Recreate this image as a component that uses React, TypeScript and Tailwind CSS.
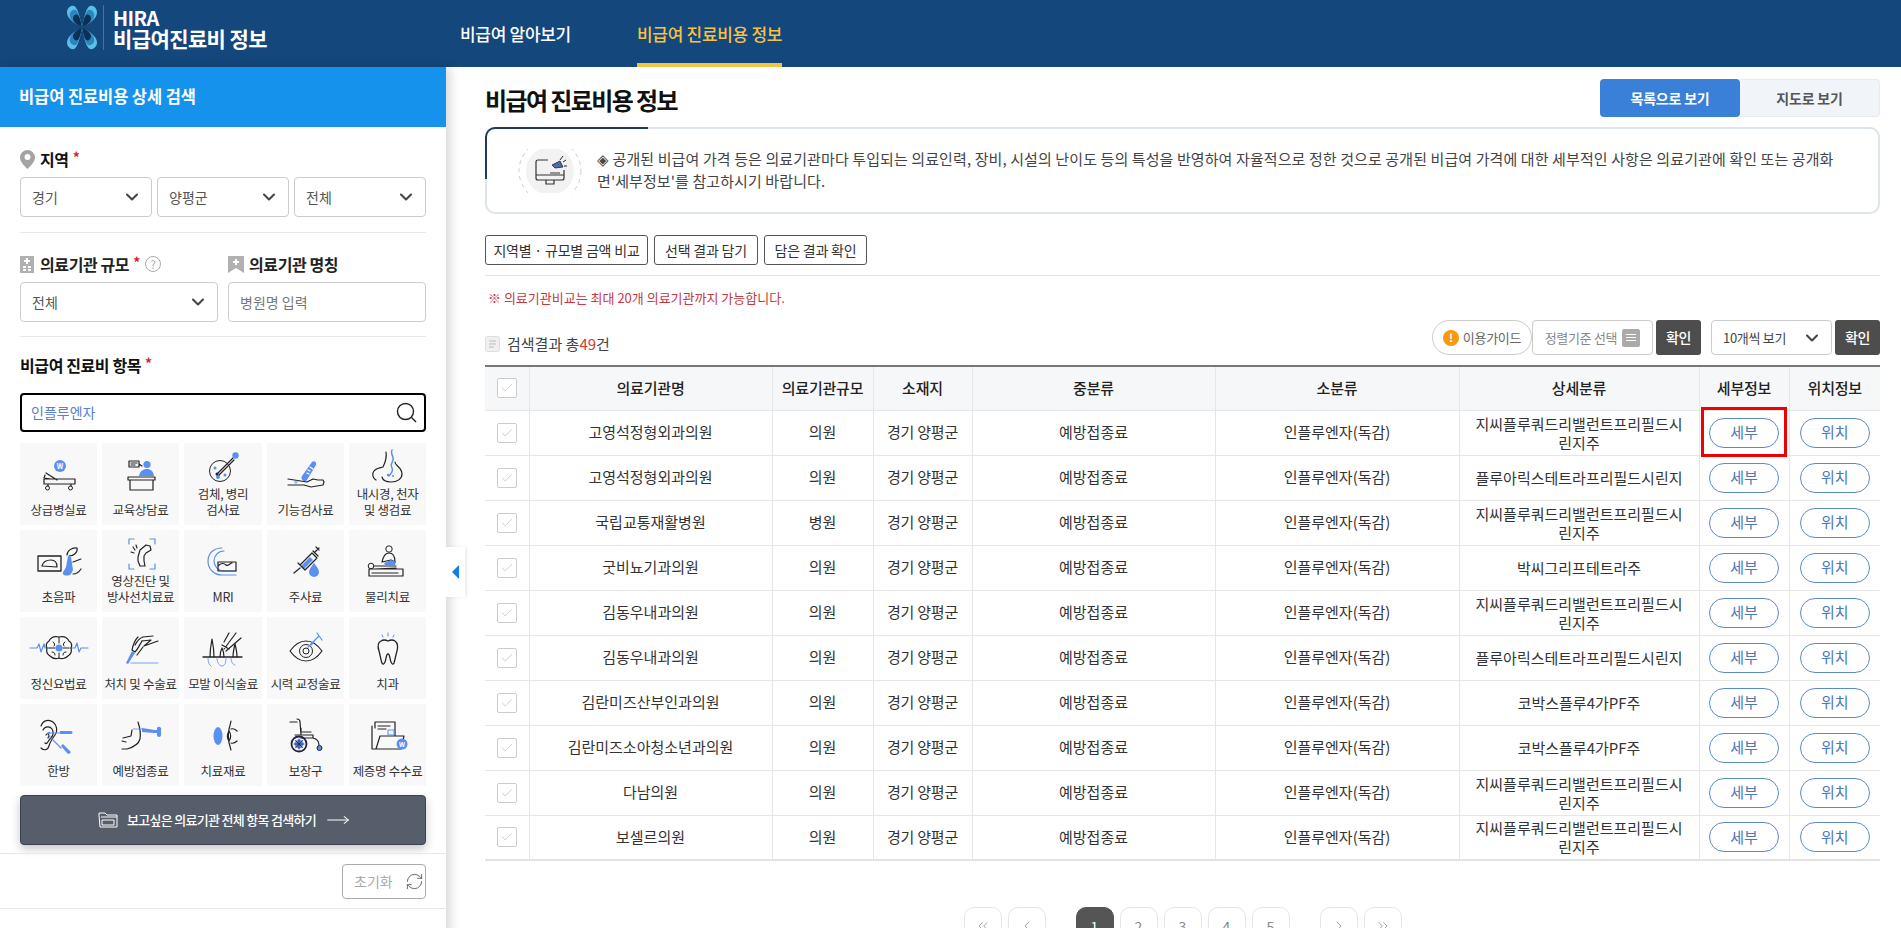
import React from "react";
import { ChevronDown, ChevronLeft, ChevronRight, ChevronsLeft, ChevronsRight, Check, RefreshCw, MoveRight } from "lucide-react";

const BLUE = "#5b8ff0";
const INK = "#222";

// shared props for the line drawings of the category cards
const Ln = ({ d, c = INK, w = 1.2 }: { d: string; c?: string; w?: number }) => (
  <path d={d} fill="none" stroke={c} strokeWidth={w} strokeLinecap="round" strokeLinejoin="round" />
);
const Fl = ({ d, c = BLUE }: { d: string; c?: string }) => <path d={d} fill={c} />;

const categories: { label: string[]; art: React.ReactNode }[] = [
  {
    label: ["상급병실료"],
    art: (
      <>
        <circle cx="31" cy="9" r="6" fill={BLUE} />
        <text x="31" y="11.5" fontSize="7" fontWeight="700" fill="#fff" textAnchor="middle">W</text>
        <Ln d="M15 22h31v5H15zM15 27v-5M17 16l11 7M16 18l-1 3 7 1M19 27v2M42 27v2" />
        <circle cx="18.500" cy="31" r="2" fill="none" stroke={INK} />
        <circle cx="41.500" cy="31" r="2" fill="none" stroke={INK} />
      </>
    ),
  },
  {
    label: ["교육상담료"],
    art: (
      <>
        <Ln d="M18 4h10v6H18zM28 7l3 2M20 6h6M20 8h4" />
        <circle cx="36" cy="7.500" r="3.600" fill={BLUE} />
        <Fl d="M28 19c1-5 4-7 8-7s6 2 7 7z" />
        <Ln d="M17 20h27v3H17zM19 23h23v10H19z" />
      </>
    ),
  },
  {
    label: ["검체, 병리", "검사료"],
    art: (
      <>
        <circle cx="27" cy="22" r="10.500" fill="none" stroke={INK} />
        <circle cx="22" cy="19" r="1.500" fill={BLUE} />
        <circle cx="25" cy="28" r="2" fill={BLUE} />
        <circle cx="32" cy="26" r="1.500" fill={BLUE} />
        <Ln d="M24 25L40 9M26 26L41 11" />
        <circle cx="24" cy="25" r="1.500" fill={INK} />
        <circle cx="42.500" cy="6.500" r="3.200" fill={BLUE} />
      </>
    ),
  },
  {
    label: ["기능검사료"],
    art: (
      <>
        <Fl d="M26 19L36 5c2-2 5 0 4 3L31 23c-2 3-7 0-5-4z" />
        <Ln d="M34 10l3 2M32 13l2 1M31 16l2 1" c="#fff" />
        <Ln d="M12 22l19 3 6-3 5 1h5l1 2-1 3-6 1-6 1-7-2-16 0" />
        <circle cx="20" cy="25" r="1.800" fill={BLUE} opacity=".6" />
      </>
    ),
  },
  {
    label: ["내시경, 천자", "및 생검료"],
    art: (
      <>
        <Ln d="M28 3c1 6-1 11-3 15-3 1-9 1-10 6-1 3 1 6 3 7M37 13c0 4 7 5 7 12 0 5-5 8-11 8-4 0-8-1-9-5" />
        <Ln d="M34 1c-2 4 2 6 1 10s-3 4-1 8-2 6-3 8" c={BLUE} w={1.500} />
        <circle cx="30" cy="26" r="1.200" fill={BLUE} />
        <circle cx="35" cy="27" r="1" fill={BLUE} />
      </>
    ),
  },
  {
    label: ["초음파"],
    art: (
      <>
        <Ln d="M9 12h23v15H9z" w={1.300} />
        <Ln d="M13 22c1-4 5-6 9-6s6 3 6 7z" />
        <Ln d="M38 11c0-4 5-8 10-7 1 4-3 8-8 8M44 18l8-3M44 30c3 0 6-2 8-5" />
        <Fl d="M39 12l3 1 2 13-2 4c-2 2-7 2-8 0-1-2 2-4 3-7z" />
      </>
    ),
  },
  {
    label: ["영상진단 및", "방사선치료료"],
    art: (
      <>
        <Ln d="M18 8V3h5M39 3h5v5M18 28v5h5M39 33h5v-5" c={BLUE} />
        <Ln d="M27 21l2-7 6-5 4 1 1 4-5 3-2 3 0 5 1 5-5 0-2-5z" />
        <Ln d="M22 11l2 3M20 16l3 1M25 9l1 3" />
      </>
    ),
  },
  {
    label: ["MRI"],
    art: (
      <>
        <Ln d="M43 31H29c-8 0-14-6-14-14S21 4 29 4" c={BLUE} />
        <Ln d="M43 27H31c-6 0-10-5-10-10S25 7 31 7" c={BLUE} />
        <Ln d="M25 18h18v9H25zM25 22c3-3 6-3 8-1s4-2 6-2" />
      </>
    ),
  },
  {
    label: ["주사료"],
    art: (
      <>
        <Fl d="M25 22l9-9 3 3-9 9z" />
        <Ln d="M24 21l12-12 5 5-12 12zM18 29l6-5M22 19l7 7M37 7l5 5M39 8l4-4M40 3l3 3M41 4l2 2" />
        <Fl d="M38 19c2 3 5 6 5 9a5 5 0 0 1-10 0c0-3 3-6 5-9z" />
      </>
    ),
  },
  {
    label: ["물리치료"],
    art: (
      <>
        <circle cx="31" cy="5" r="3.200" fill="none" stroke={INK} />
        <Ln d="M31 9c-4 0-6 4-7 9l9-2 4 2c0-5-2-9-6-9z" />
        <Fl d="M26 19l7-3 5 2-1 3-10 0z" />
        <circle cx="13" cy="22" r="2.800" fill="none" stroke={INK} />
        <Ln d="M11 25h34v7H11zM16 22h22M16 25l22-1M14 29h26" />
      </>
    ),
  },
  {
    label: ["정신요법료"],
    art: (
      <>
        <Ln d="M1 17h7l2-4 2 8 3-8 1 4h4M41 17h5l2-5 2 9 2-4h7" c={BLUE} />
        <Ln d="M20 10c2-4 6-5 10-4 4-1 8 0 10 4 3 2 3 5 2 7 1 3 0 6-3 8-3 3-7 3-9 2-3 1-6 1-9-2-3-2-4-5-3-8-1-2-1-5 2-7z" />
        <Ln d="M24 11c2 1 2 3 1 4M36 11c-2 1-2 3-1 4M23 21c2 0 3 1 3 3M37 21c-2 0-3 1-3 3M30 6v6M30 22v5M20 17h6M34 17h6" w={1} />
        <circle cx="30" cy="17" r="3.500" fill={BLUE} />
      </>
    ),
  },
  {
    label: ["처치 및 수술료"],
    art: (
      <>
        <Ln d="M24 14c2-4 5-7 8-8l10-1M31 10l9-1-7 6 14-5M32 16l-6 8" />
        <Ln d="M27 6c-3 3-5 8-6 13l3 2c3-3 5-8 7-11" />
        <Fl d="M21 20l3 2-7 11-2-1z" />
        <Ln d="M20 32h27" c={BLUE} w={.8} />
      </>
    ),
  },
  {
    label: ["모발 이식술료"],
    art: (
      <>
        <Ln d="M10 26h39" w={1.300} />
        <Ln d="M17 26c0-7 1-13 2-18 1 5 2 11 2 18M40 26c0-5 1-9 2-13 1 4 2 8 2 13M27 26c0-4 1-7 2-9 1 2 2 5 2 9" />
        <Ln d="M31 18L43 2M33 20L48 7M29 14l7 4M36 2l-5 9" />
        <Ln d="M15 27c0 4 1 7 3 8M24 27c0 4 2 8 5 8s4-4 4-8M38 27c0 4 2 7 4 7" c={BLUE} w={.8} />
      </>
    ),
  },
  {
    label: ["시력 교정술료"],
    art: (
      <>
        <Ln d="M14 20c5-7 10-10 16-10s11 3 16 10c-5 7-10 10-16 10s-11-3-16-10z" />
        <circle cx="30" cy="20" r="6.500" fill="none" stroke={INK} />
        <circle cx="30" cy="20" r="3" fill="none" stroke={INK} />
        <Ln d="M32 16L43 5M41 2l5 7M35 14l3-3" c={BLUE} />
      </>
    ),
  },
  {
    label: ["치과"],
    art: (
      <>
        <Ln d="M23 10c3-2 5-1 7 0 2-1 4-2 7 0 3 2 3 7 2 10s-2 9-3 12c-1 2-2 1-3-1s-1-8-3-8-2 6-3 8-2 3-3 1-2-9-3-12-2-8 2-10z" w={1.300} />
        <Ln d="M24 4l1 2M30 2v3M36 4l-1 2" c={BLUE} w={1} />
      </>
    ),
  },
  {
    label: ["한방"],
    art: (
      <>
        <Ln d="M12 8c2-6 8-7 12-4s5 9 2 13-5 7-6 11-5 5-8 2M14 12c2-4 7-4 9-1s1 7-2 10c-2 2-3 6-5 4M17 17c2-3 4 0 2 3" />
        <Ln d="M19 15h12M20 18l12 12" c={BLUE} />
        <Fl d="M31 13h11a1.500 1.500 0 0 1 0 3H31zM32 28l2-2 7 7c2 2-1 4-3 2z" />
        <circle cx="20" cy="15" r="1.300" fill={BLUE} />
      </>
    ),
  },
  {
    label: ["예방접종료"],
    art: (
      <>
        <Ln d="M27 4c2 6 3 11 2 17-1 4-6 8-13 10h-5M12 20l8-2 1-6M11 23l4 1" />
        <Ln d="M22 11h9" c={BLUE} w={.8} />
        <Fl d="M31 10l13 2h2v-2a2 2 0 0 1 4 2v5a2 2 0 0 1-4 0v-2h-3l-12-1z" />
      </>
    ),
  },
  {
    label: ["치료재료"],
    art: (
      <>
        <ellipse cx="25" cy="18" rx="4.500" ry="9" fill={BLUE} />
        <Ln d="M38 3c-1 5-1 5-2 8-1 5-1 9 0 14 1 2 1 4 2 7M38 11c3-1 5 1 6 2M38 25c3 1 5-1 6-2" />
        <Ln d="M36 13c-2 3-2 7 0 10 2-3 2-7 0-10z" />
      </>
    ),
  },
  {
    label: ["보장구"],
    art: (
      <>
        <Ln d="M14 4h7M21 1c2 0 3 1 3 3l1 13h12v3H25M25 10v4h10M37 20c4 1 6 3 6 7M24 17h-5" w={1.200} />
        <circle cx="23" cy="26" r="7.500" fill="none" stroke="#224" strokeWidth="1.800" />
        <circle cx="23" cy="26" r="4.500" fill={BLUE} />
        <Ln d="M23 21v10M18 26h10M19.500 22.500l7 7M26.500 22.500l-7 7" c="#224" w={.8} />
        <circle cx="43.500" cy="30" r="2.500" fill={BLUE} stroke="#224" />
      </>
    ),
  },
  {
    label: ["제증명 수수료"],
    art: (
      <>
        <Ln d="M17 4h20v14M17 4v6M14 8v23h4l4-13h24M46 18l-3 13H18" />
        <Ln d="M20 8h12M20 11h8" />
        <path d="M30 12h6v5h-6z" fill="none" stroke={BLUE} />
        <circle cx="44" cy="26" r="5.500" fill={BLUE} />
        <text x="44" y="28.500" fontSize="6.500" fontWeight="700" fill="#fff" textAnchor="middle">W</text>
      </>
    ),
  },
];

const rows = [
  ["고영석정형외과의원", "의원", "지씨플루쿼드리밸런트프리필드시린지주"],
  ["고영석정형외과의원", "의원", "플루아릭스테트라프리필드시린지"],
  ["국립교통재활병원", "병원", "지씨플루쿼드리밸런트프리필드시린지주"],
  ["굿비뇨기과의원", "의원", "박씨그리프테트라주"],
  ["김동우내과의원", "의원", "지씨플루쿼드리밸런트프리필드시린지주"],
  ["김동우내과의원", "의원", "플루아릭스테트라프리필드시린지"],
  ["김란미즈산부인과의원", "의원", "코박스플루4가PF주"],
  ["김란미즈소아청소년과의원", "의원", "코박스플루4가PF주"],
  ["다남의원", "의원", "지씨플루쿼드리밸런트프리필드시린지주"],
  ["보셀르의원", "의원", "지씨플루쿼드리밸런트프리필드시린지주"],
];

const headers = ["의료기관명", "의료기관규모", "소재지", "중분류", "소분류", "상세분류", "세부정보", "위치정보"];

// four mirrored petals of the logo, one colour per layer
const petal = "M0 -1C-2 -8 -3 -17 -7 -21C-10 -23 -15 -20 -15 -15C-15 -9 -7 -3 0 -1z";
const LogoLayer = ({ k, fill }: { k: number; fill: string }) => (
  <g fill={fill}>
    <path d={petal} transform={`translate(15 22.500) scale(${k} ${k})`} />
    <path d={petal} transform={`translate(15 22.500) scale(${-k} ${k})`} />
    <path d={petal} transform={`translate(15 22.500) scale(${k} ${-k})`} />
    <path d={petal} transform={`translate(15 22.500) scale(${-k} ${-k})`} />
  </g>
);

const Select = ({ text, className }: { text: string; className: string }) => (
  <div className={`h-10 flex items-center justify-between pl-[11px] pr-[9px] border border-[#ccc] rounded-[4px] text-[14px] text-[#555] ${className}`}>
    <span>{text}</span>
    <ChevronDown size={20} strokeWidth={2.5} className="text-[#444]" />
  </div>
);

const Checkbox = () => (
  <span className="w-5 h-5 mx-auto flex items-center justify-center border border-[#ccc] rounded-[2px] bg-white">
    <Check size={14} strokeWidth={1} className="text-[#aaa]" />
  </span>
);

const Required = () => <span className="text-[#d9232e] text-[14px] ml-1 -mt-[3px]">*</span>;

const Sidebar = () => (
  <aside className="relative w-[446px] shrink-0 bg-white shadow-[4px_0_10px_rgba(0,0,0,0.16)] z-10">
    <div className="h-[60px] bg-[#1592ec] pl-[19px] flex items-center text-white text-[16.500px] font-bold tracking-[-0.1px] pb-[2px]">
      비급여 진료비용 상세 검색
    </div>
    <div className="px-5">
      <div className="pt-[18px] flex items-center h-[50px] pb-[4px] text-[16px] font-bold text-[#111] tracking-[-0.4px]">
        <svg width="15" height="19" viewBox="0 0 15 19" className="mr-[5px]">
          <path d="M7.500 0a7.500 7.500 0 0 1 7.500 7.500c0 4-4 8-7.500 11.500C4 15.500 0 11.500 0 7.500A7.500 7.500 0 0 1 7.500 0z" fill="#a3a3a3" />
          <circle cx="7.500" cy="7" r="3" fill="#fff" />
        </svg>
        지역<Required />
      </div>
      <div className="flex gap-[5px]">
        <Select text="경기" className="w-[132px]" />
        <Select text="양평군" className="w-[132px]" />
        <Select text="전체" className="w-[132px]" />
      </div>
      <div className="h-px bg-[#e8e8e8] mt-[15px]" />
      <div className="flex gap-[10px] mt-[16px]">
        <div className="w-[198px]">
          <div className="h-[30px] flex items-center text-[16px] font-bold text-[#222] tracking-[-0.4px]">
            <svg width="14" height="17" viewBox="0 0 14 17" className="mr-[6px]">
              <rect width="14" height="17" fill="#b0b0b0" />
              <path d="M6 2h2v2h2v2H8v2H6V6H4V4h2zM3 10h3v2H3zM8 10h3v2H8zM3 13h3v2H3zM8 13h3v2H8z" fill="#fff" />
            </svg>
            의료기관 규모<Required />
            <span className="ml-[5px] w-4 h-4 rounded-full border border-[#aaa] text-[#aaa] text-[11px] font-normal flex items-center justify-center">?</span>
          </div>
          <Select text="전체" className="w-full mt-[3px]" />
        </div>
        <div className="w-[198px]">
          <div className="h-[30px] flex items-center text-[16px] font-bold text-[#222] tracking-[-0.4px]">
            <svg width="16" height="17" viewBox="0 0 16 17" className="mr-[5px]">
              <path d="M0 0h16v17l-8-5-8 5z" fill="#b0b0b0" />
              <path d="M7 3h2v2h2v2H9v2H7V7H5V5h2z" fill="#fff" />
            </svg>
            의료기관 명칭
          </div>
          <div className="w-full h-10 mt-[3px] flex items-center pl-[11px] border border-[#ccc] rounded-[4px] text-[14px] text-[#777]">병원명 입력</div>
        </div>
      </div>
      <div className="h-px bg-[#e8e8e8] mt-[14px]" />
      <div className="h-[56px] flex items-center text-[16px] font-bold text-[#111] tracking-[-0.4px]">
        비급여 진료비 항목<Required />
      </div>
      <div className="h-[39px] border-2 border-black rounded-[4px] flex items-center justify-between pl-[9px] pr-[7px] text-[14px] text-[#5a80cc]">
        <span>인플루엔자</span>
        <svg width="21" height="21" viewBox="0 0 21 21" fill="none" stroke="#222" strokeWidth="1.400">
          <circle cx="9.500" cy="9.500" r="8" />
          <path d="M15.500 15.500l4.500 4.500" />
        </svg>
      </div>
      <div className="mt-[11px] grid grid-cols-[77px_77px_78px_77px_77px] auto-rows-[82px] gap-[5px]">
        {categories.map((c) => (
          <div key={c.label.join()} className={`bg-[#f8f8f8] flex flex-col items-center pb-[7px] ${c.label.length > 1 ? "pt-[6px]" : "pt-[14px]"}`}>
            <svg width="60" height="36" viewBox="0 0 60 36" className="shrink-0">{c.art}</svg>
            <div className="mt-auto text-center text-[12.500px] leading-[16px] text-[#333] tracking-[-0.3px] whitespace-nowrap">
              {c.label.map((l) => <div key={l}>{l}</div>)}
            </div>
          </div>
        ))}
      </div>
      <div className="mt-[9px] h-[50px] rounded-[4px] border border-[#3c4350] bg-[#565e6b] shadow-[0_4px_10px_rgba(0,0,0,0.22)] flex items-center justify-center text-white text-[13px] font-medium tracking-[-0.7px]">
        <svg width="20" height="16" viewBox="0 0 20 16" fill="none" stroke="#fff" strokeWidth="1" className="mr-[9px]">
          <path d="M1 3V1h6l2 2h10v12H2zM3 5h16M4 8h12v5H4z" />
        </svg>
        보고싶은 의료기관 전체 항목 검색하기
        <MoveRight size={20} strokeWidth={1} className="ml-[12px] scale-x-125" />
      </div>
    </div>
    <div className="h-px bg-[#e8e8e8] mt-[8px]" />
    <div className="flex justify-end pr-5 pt-[10px]">
      <div className="w-[84px] h-[35px] border border-[#aaa] rounded-[4px] flex items-center justify-between pl-[11px] pr-px text-[14px] text-[#aaa]">
        초기화
        <RefreshCw size={19} strokeWidth={1} className="text-[#444]" />
      </div>
    </div>
    <div className="h-px bg-[#e8e8e8] mt-[9px]" />
    <div className="absolute left-full top-[480px] w-[19px] h-[50px] bg-white shadow-[2px_0_3px_rgba(0,0,0,0.08)] flex items-center pl-[6px]">
      <span className="w-0 h-0 border-y-[7px] border-y-transparent border-r-[7px] border-r-[#0f7fe6]" />
    </div>
  </aside>
);

const PageBtn = ({ children, active, className = "" }: { children: React.ReactNode; active?: boolean; className?: string }) => (
  <span className={`w-[38px] h-[38px] rounded-[10px] flex items-center justify-center text-[14px] border ${active ? "bg-[#555] border-[#555] text-white" : "bg-white border-[#e5e5e5] text-[#888]"} ${className}`}>
    {children}
  </span>
);

const Main = () => (
  <main className="flex-1 min-w-0 pl-[39px] pr-[21px]">
    <div className="h-[60px] flex items-start justify-between">
      <h1 className="mt-[13px] text-[24px] leading-[40px] font-bold text-[#111] tracking-[-1.600px]">비급여 진료비용 정보</h1>
      <div className="mt-[12px] flex h-[38px] text-[14px] font-bold tracking-[-0.2px]">
        <span className="w-[140px] bg-[#3a80d9] text-white rounded-[4px] flex items-center justify-center">목록으로 보기</span>
        <span className="w-[140px] bg-[#f1f5f9] border border-l-0 border-[#e6ebf0] text-[#555] rounded-r-[4px] flex items-center justify-center">지도로 보기</span>
      </div>
    </div>
    <div className="relative h-[87px] border-2 border-[#dde4ea] rounded-[10px] flex items-center pl-[31px]">
      <div className="absolute -left-[2px] -top-[2px] w-[163px] h-[52px] border-t-2 border-l-2 border-[#1b3a66] rounded-tl-[10px]" />
      <svg width="64" height="44" viewBox="0 0 64 44" className="shrink-0">
        <circle cx="32" cy="22" r="31" fill="none" stroke="#ccc" strokeDasharray="4 4" />
        <circle cx="32" cy="22" r="24" fill="#f2f2f2" />
        <path d="M30 11H20a2 2 0 0 0-2 2v16a2 2 0 0 0 2 2h24a2 2 0 0 0 2-2V21M18 26h28M28 31v4h8v-4M32 24h10" fill="none" stroke="#333" strokeWidth="1.200" />
        <path d="M34 16l8-4 3 6-8 1z" fill="#4a6fa8" stroke="#222" strokeWidth=".8" />
        <path d="M42 11l3-4M45 13l3-2M46 17h3" stroke="#222" />
      </svg>
      <p className="ml-[15px] text-[15px] leading-[22px] text-[#444] tracking-[0.1px] whitespace-nowrap pb-[2px]">
        ◈ 공개된 비급여 가격 등은 의료기관마다 투입되는 의료인력, 장비, 시설의 난이도 등의 특성을 반영하여 자율적으로 정한 것으로 공개된 비급여 가격에 대한 세부적인 사항은 의료기관에 확인 또는 공개화<br />
        면'세부정보'를 참고하시기 바랍니다.
      </p>
    </div>
    <div className="mt-[21px] flex gap-[6px] text-[14px] text-[#333] tracking-[-0.2px] pb-[10px] border-b border-[#e3e3e3]">
      <span className="h-[30px] w-[163px] border border-[#555] rounded-[3px] flex items-center justify-center">지역별 · 규모별 금액 비교</span>
      <span className="h-[30px] w-[104px] border border-[#555] rounded-[3px] flex items-center justify-center">선택 결과 담기</span>
      <span className="h-[30px] w-[103px] border border-[#555] rounded-[3px] flex items-center justify-center">담은 결과 확인</span>
    </div>
    <p className="mt-[12px] pl-[3px] text-[13px] leading-[20px] text-[#c4383f]">※ 의료기관비교는 최대 20개 의료기관까지 가능합니다.</p>
    <div className="mt-[12px] h-[35px] flex items-center justify-between">
      <div className="flex items-center text-[15px] text-[#444] pt-[13px]">
        <svg width="15" height="16" viewBox="0 0 15 16" fill="none" className="mr-[7px]">
          <rect x=".5" y=".5" width="14" height="15" rx="2" fill="#f0f0f0" stroke="#ddd" />
          <path d="M4 5h7M4 8h7M4 11h5" stroke="#bbb" />
        </svg>
        검색결과 총<span className="text-[#d9342b]">49</span>건
      </div>
      <div className="flex items-center text-[13px] tracking-[-0.3px]">
        <span className="w-[100px] h-[35px] rounded-full border border-[#ccc] flex items-center justify-center text-[#666]">
          <span className="w-4 h-4 mr-1 rounded-full bg-[#f79a0e] text-white text-[11px] font-bold flex items-center justify-center">!</span>
          이용가이드
        </span>
        <span className="w-[121px] h-[35px] border border-[#ccc] rounded-[4px] flex items-center justify-center text-[#888]">
          정렬기준 선택
          <span className="ml-[5px] w-[18px] h-[18px] rounded-[2px] bg-[#aaa] flex flex-col items-center justify-center gap-[2px]">
            <i className="w-[10px] h-px bg-white" /><i className="w-[10px] h-px bg-white" /><i className="w-[10px] h-px bg-white" />
          </span>
        </span>
        <span className="ml-[3px] w-[45px] h-[35px] bg-[#4d4d4d] text-white rounded-[3px] font-medium text-[14px] flex items-center justify-center">확인</span>
        <span className="ml-[10px] w-[121px] h-[35px] border border-[#ccc] rounded-[4px] flex items-center justify-between pl-[11px] pr-[9px] text-[#444]">
          10개씩 보기
          <ChevronDown size={20} strokeWidth={2.5} className="text-[#444]" />
        </span>
        <span className="ml-[3px] w-[45px] h-[35px] bg-[#4d4d4d] text-white rounded-[3px] font-medium text-[14px] flex items-center justify-center">확인</span>
      </div>
    </div>
    <table className="mt-[10px] w-[1395px] table-fixed border-collapse border-t-2 border-t-[#777] border-b-2 border-b-[#e2e2e2] text-[15px] text-center text-[#333]">
      <colgroup>
        <col className="w-[44px]" /><col className="w-[243px]" /><col className="w-[101px]" /><col className="w-[99px]" />
        <col className="w-[243px]" /><col className="w-[244px]" /><col className="w-[240px]" /><col className="w-[90px]" /><col className="w-[91px]" />
      </colgroup>
      <thead>
        <tr className="h-[44px] bg-[#f6f7f9]">
          <th className="border-b border-r border-[#e6e6e6]"><Checkbox /></th>
          {headers.map((h, i) => (
            <th key={h} className={`font-medium text-[#222] tracking-[-0.2px] border-b border-[#e6e6e6] ${i < 7 ? "border-r" : ""}`}>{h}</th>
          ))}
        </tr>
      </thead>
      <tbody>
        {rows.map((r, i) => (
          <tr key={i} className="h-[45px] border-b border-[#e6e6e6] last:border-b-0">
            <td className="border-r border-[#e6e6e6]"><Checkbox /></td>
            <td className="border-r border-[#e6e6e6]">{r[0]}</td>
            <td className="border-r border-[#e6e6e6]">{r[1]}</td>
            <td className="border-r border-[#e6e6e6] tracking-[-0.2px]">경기 양평군</td>
            <td className="border-r border-[#e6e6e6]">예방접종료</td>
            <td className="border-r border-[#e6e6e6]">인플루엔자(독감)</td>
            <td className="border-r border-[#e6e6e6] px-[10px] leading-[19px] break-all">{r[2]}</td>
            <td className="border-r border-[#e6e6e6] relative">
              <span className="mx-auto w-[70px] h-[30px] rounded-full border border-[#5b8ac9] text-[#4a78b8] flex items-center justify-center">세부</span>
              {i === 0 && <span className="absolute left-[1px] -top-[4px] w-[86px] h-[50px] border-[3px] border-[#f00000]" />}
            </td>
            <td>
              <span className="mx-auto w-[70px] h-[30px] rounded-full border border-[#5b8ac9] text-[#4a78b8] flex items-center justify-center">위치</span>
            </td>
          </tr>
        ))}
      </tbody>
    </table>
    <div className="mt-[46px] flex justify-center items-center">
      <PageBtn><ChevronsLeft size={16} strokeWidth={1.2} /></PageBtn>
      <PageBtn className="ml-[6px]"><ChevronLeft size={16} strokeWidth={1.2} /></PageBtn>
      <PageBtn active className="ml-[30px]">1</PageBtn>
      {[2, 3, 4, 5].map((n) => <PageBtn key={n} className="ml-[6px]">{n}</PageBtn>)}
      <PageBtn className="ml-[30px]"><ChevronRight size={16} strokeWidth={1.2} /></PageBtn>
      <PageBtn className="ml-[6px]"><ChevronsRight size={16} strokeWidth={1.2} /></PageBtn>
    </div>
  </main>
);

const App = () => (
  <div className="h-screen overflow-hidden bg-white font-['Noto_Sans_CJK_KR','Liberation_Sans',sans-serif]">
    <header className="h-[67px] bg-[#14477c] flex text-white">
      <div className="w-[460px] shrink-0 pl-[67px] pt-[5px] flex">
        <svg width="30" height="45" viewBox="0 0 30 45">
          <LogoLayer k={1} fill="#5cbfe6" />
          <LogoLayer k={0.82} fill="#2b86bf" />
          <LogoLayer k={0.6} fill="#0c2f55" />
        </svg>
        <span className="ml-[6px] w-px h-[45px] bg-[#4d7199]" />
        <div className="ml-[9px] font-bold tracking-[-0.6px]">
          <div className="text-[20px] leading-[20px] mt-[3px]">HIRA</div>
          <div className="text-[21px] leading-[20px] whitespace-nowrap">비급여진료비 정보</div>
        </div>
      </div>
      <nav className="flex text-[17px] font-medium tracking-[-0.3px]">
        <div className="w-[177px] h-[67px] leading-[68px]">비급여 알아보기</div>
        <div className="h-[67px] leading-[68px] text-[#f6c244] border-b-4 border-[#f6c244]">비급여 진료비용 정보</div>
      </nav>
    </header>
    <div className="flex">
      <Sidebar />
      <Main />
    </div>
  </div>
);

export default App;
